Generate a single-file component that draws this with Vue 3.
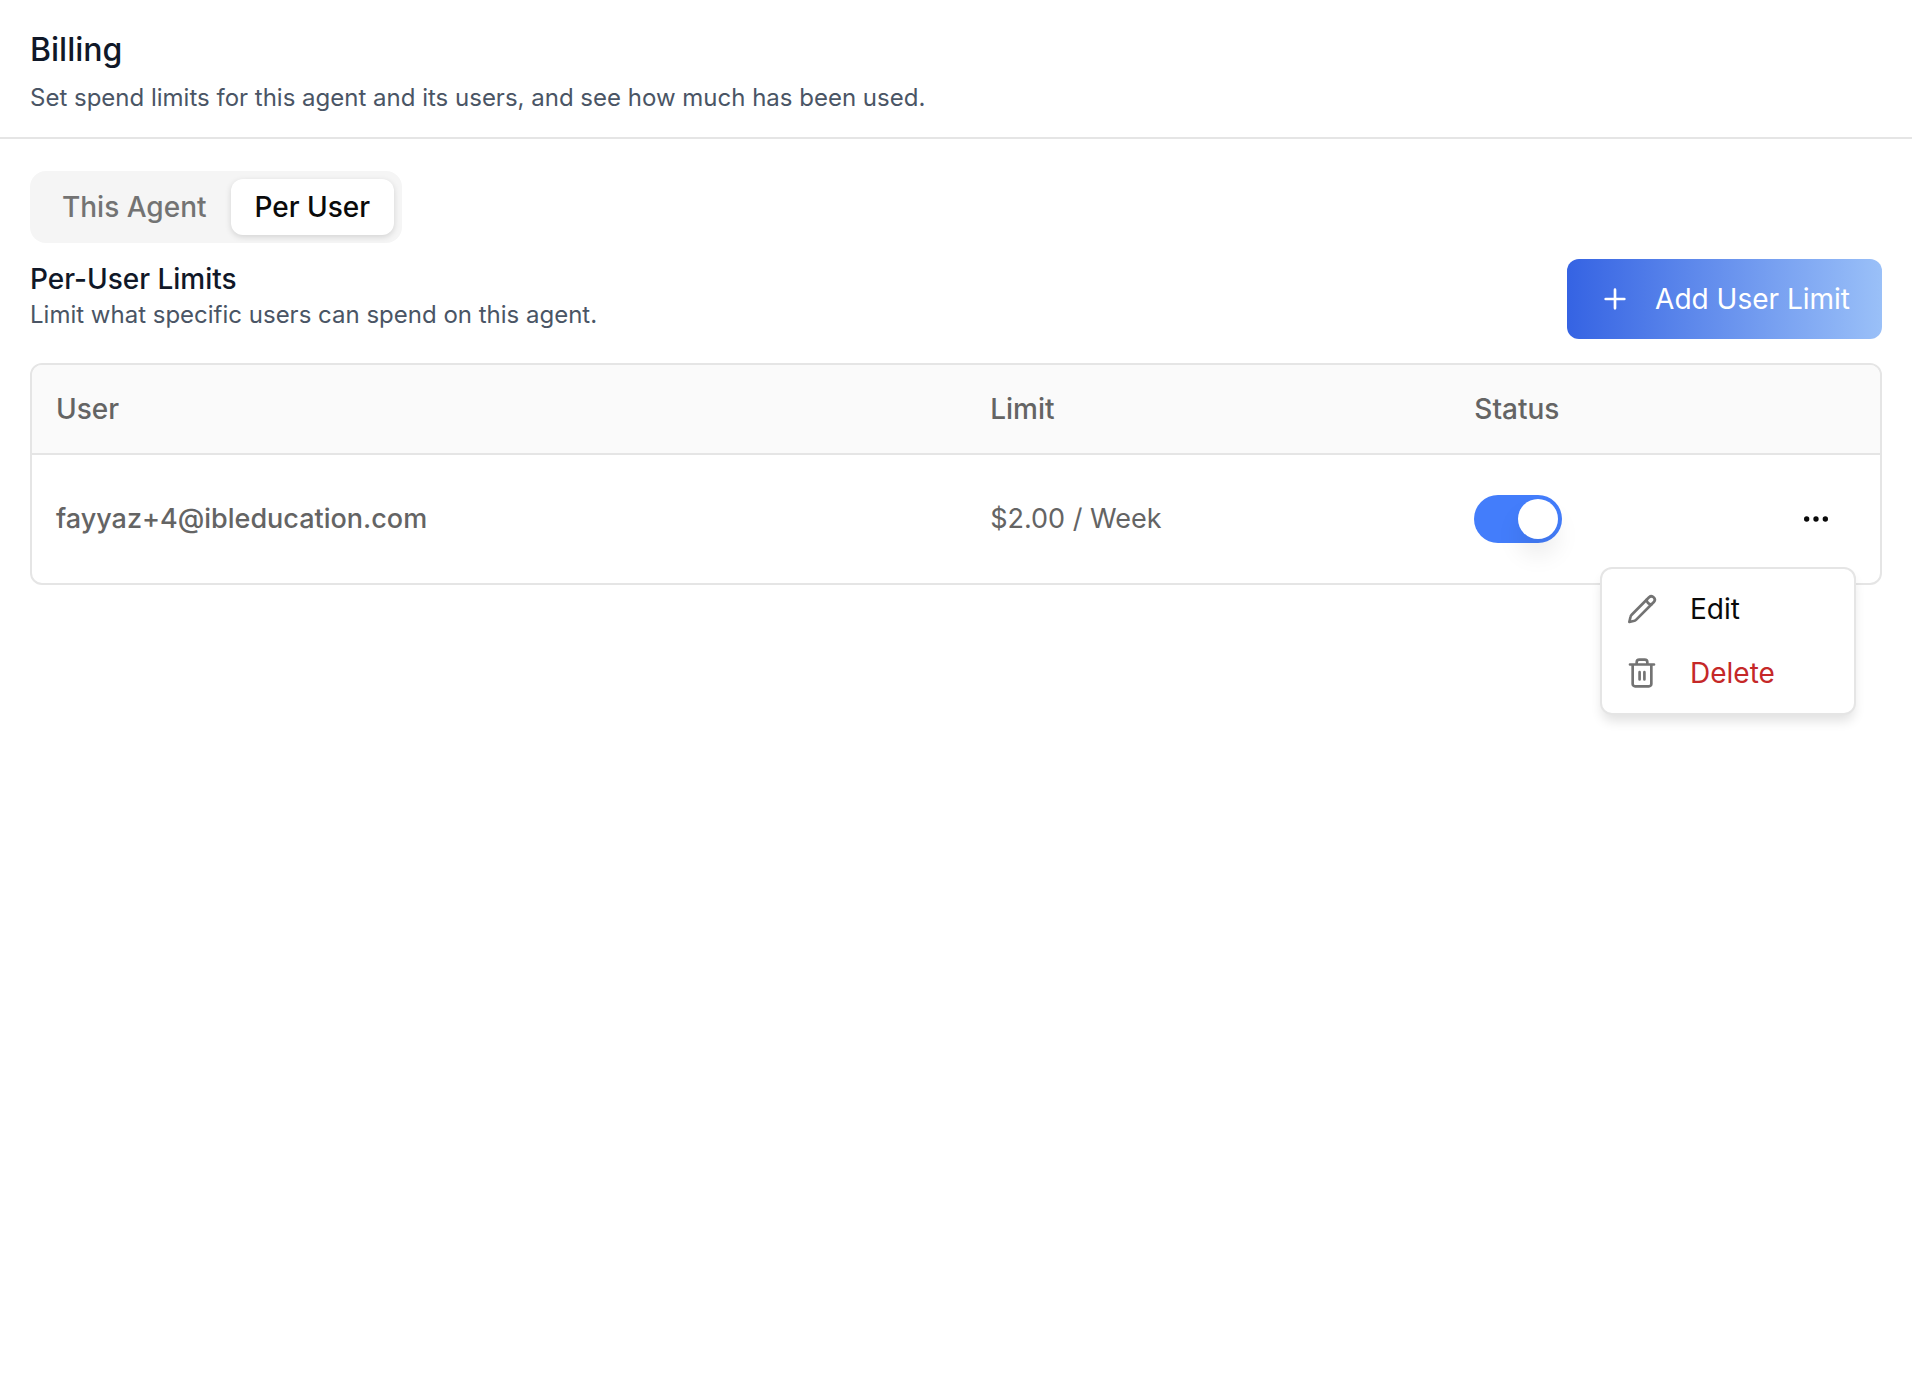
<script setup>
import { ref } from 'vue'

const tabs = ['This Agent', 'Per User']
const activeTab = ref('Per User')
const limits = ref([
  { id: 1, user: 'fayyaz+4@ibleducation.com', limit: '$2.00 / Week', enabled: true },
])
const openMenu = ref(1)

function toggleMenu(id) {
  openMenu.value = openMenu.value === id ? null : id
}
</script>

<template>
  <div class="page">
    <header class="page-header">
      <h1>Billing</h1>
      <p class="subtitle">Set spend limits for this agent and its users, and see how much has been used.</p>
    </header>

    <main class="content">
      <div class="tabs" role="tablist" aria-label="Limit scope">
        <button
          v-for="tab in tabs"
          :key="tab"
          type="button"
          role="tab"
          class="tab"
          :class="{ active: tab === activeTab }"
          :aria-selected="tab === activeTab"
          @click="activeTab = tab"
        >{{ tab }}</button>
      </div>

      <section class="limits">
        <div class="section-head">
          <div>
            <h2>Per-User Limits</h2>
            <p class="section-text">Limit what specific users can spend on this agent.</p>
          </div>
          <button type="button" class="add-button">
            <svg viewBox="0 0 24 24" aria-hidden="true"><path d="M5 12h14M12 5v14" /></svg>
            <span>Add User Limit</span>
          </button>
        </div>

        <table class="limits-table">
          <colgroup>
            <col class="col-user" />
            <col class="col-limit" />
            <col class="col-status" />
            <col />
          </colgroup>
          <thead>
            <tr>
              <th scope="col">User</th>
              <th scope="col">Limit</th>
              <th scope="col">Status</th>
              <th scope="col" aria-label="Actions"></th>
            </tr>
          </thead>
          <tbody>
            <tr v-for="row in limits" :key="row.id">
              <td class="user">{{ row.user }}</td>
              <td>{{ row.limit }}</td>
              <td>
                <input
                  v-model="row.enabled"
                  type="checkbox"
                  role="switch"
                  class="switch"
                  :aria-label="`Limit enabled for ${row.user}`"
                />
              </td>
              <td>
                <div class="actions">
                  <button
                    type="button"
                    class="more"
                    aria-label="Row actions"
                    aria-haspopup="menu"
                    :aria-expanded="openMenu === row.id"
                    @click="toggleMenu(row.id)"
                  >
                    <svg viewBox="0 0 24 24" aria-hidden="true">
                      <circle cx="5" cy="12" r="1" />
                      <circle cx="12" cy="12" r="1" />
                      <circle cx="19" cy="12" r="1" />
                    </svg>
                  </button>
                  <div v-if="openMenu === row.id" class="menu" role="menu">
                    <button type="button" role="menuitem" class="menu-item">
                      <svg viewBox="0 0 24 24" aria-hidden="true">
                        <path d="M17.3 3.2a2.55 2.55 0 0 1 3.6 3.6L7.7 20c-.4.4-.8.6-1.3.8l-3.9.9.9-3.9c.1-.5.4-.9.7-1.3z" />
                        <path d="M15.4 5.1c.3 1.9 1.7 3.3 3.6 3.6" />
                      </svg>
                      <span>Edit</span>
                    </button>
                    <button type="button" role="menuitem" class="menu-item danger">
                      <svg viewBox="0 0 24 24" aria-hidden="true">
                        <path d="M3 5.6h18M19 5.6v14.6a1.8 1.8 0 0 1-1.8 1.8H6.8A1.8 1.8 0 0 1 5 20.2V5.6M8 5.6V4a2 2 0 0 1 2-2h4a2 2 0 0 1 2 2v1.6M10.2 11.4v5.4M13.8 11.4v5.4" />
                      </svg>
                      <span>Delete</span>
                    </button>
                  </div>
                </div>
              </td>
            </tr>
          </tbody>
        </table>
      </section>
    </main>
  </div>
</template>

<style>
body {
  margin: 0;
  background: #fff;
}
</style>

<style scoped>
.page {
  min-height: 100vh;
  box-sizing: border-box;
  font-family: Inter, "Liberation Sans", sans-serif;
  font-size: 28px;
  line-height: 40px;
  color: #0a0a0a;
}

h1,
h2,
p {
  margin: 0;
}

button {
  font: inherit;
  color: inherit;
  border: 0;
  padding: 0;
  background: none;
  cursor: pointer;
}

svg {
  width: 32px;
  height: 32px;
  flex: none;
  fill: none;
  stroke: currentColor;
  stroke-width: 2;
  stroke-linecap: round;
  stroke-linejoin: round;
}

.page-header {
  padding: 30px 30px 22px;
  border-bottom: 2px solid #e5e5e5;
}

h1 {
  font-size: 32px;
  line-height: 40px;
  font-weight: 500;
  color: #101828;
}

.subtitle {
  margin-top: 11px;
  font-size: 24px;
  line-height: 34px;
  color: #4a5565;
}

.content {
  padding: 32px 30px;
}

.tabs {
  display: flex;
  width: fit-content;
  padding: 8px;
  border-radius: 16px;
  background: #f5f5f5;
}

.tab {
  padding: 8px 24px;
  border-radius: 12px;
  font-weight: 500;
  color: #737373;
}

.tab.active {
  background: #fff;
  color: #0a0a0a;
  box-shadow: 0 2px 6px rgba(0, 0, 0, 0.14);
}

.section-head {
  display: flex;
  align-items: flex-start;
  justify-content: space-between;
  margin-top: 16px;
  margin-bottom: 24px;
}

h2 {
  font-size: 28px;
  line-height: 40px;
  font-weight: 500;
  color: #101828;
}

.section-text {
  font-size: 24px;
  line-height: 32px;
  color: #4a5565;
}

.add-button {
  display: flex;
  align-items: center;
  gap: 24px;
  height: 80px;
  padding: 0 32px;
  border-radius: 12px;
  background: linear-gradient(to right, #3563e3, #9ac0f8);
  color: #fff;
}

.limits-table {
  width: 100%;
  table-layout: fixed;
  border: 2px solid #e5e5e5;
  border-radius: 12px;
  border-collapse: separate;
  border-spacing: 0;
  color: #646464;
}

.col-user {
  width: 50.55%;
}

.col-limit {
  width: 26.2%;
}

.col-status {
  width: 12%;
}

th {
  padding: 24px;
  border-bottom: 2px solid #e5e5e5;
  background: #fafafa;
  font-weight: 500;
  text-align: left;
}

th:first-child {
  border-top-left-radius: 10px;
}

th:last-child {
  border-top-right-radius: 10px;
}

td {
  padding: 24px;
  font-size: 27px;
  vertical-align: middle;
}

.user {
  font-weight: 500;
}

.switch {
  appearance: none;
  display: block;
  width: 88px;
  height: 48px;
  margin: 0;
  padding: 4px;
  box-sizing: border-box;
  border-radius: 24px;
  background: #d4d4d4;
  cursor: pointer;
}

.switch::before {
  content: "";
  display: block;
  width: 40px;
  height: 40px;
  border-radius: 50%;
  background: #fff;
  box-shadow: 0 16px 24px rgba(0, 0, 0, 0.08);
}

.switch:checked {
  background: #437dfb;
}

.switch:checked::before {
  margin-left: auto;
}

.actions {
  position: relative;
  display: flex;
  justify-content: flex-end;
  font-size: 28px;
}

.more {
  display: flex;
  align-items: center;
  justify-content: center;
  width: 80px;
  height: 80px;
  color: #0a0a0a;
}

.more svg {
  fill: currentColor;
}

.menu {
  position: absolute;
  top: calc(100% + 8px);
  right: 0;
  z-index: 1;
  width: 256px;
  box-sizing: border-box;
  padding: 8px;
  border: 2px solid #e5e5e5;
  border-radius: 12px;
  background: #fff;
  box-shadow: 0 8px 12px -2px rgba(0, 0, 0, 0.12);
}

.menu-item {
  display: flex;
  align-items: center;
  gap: 32px;
  width: 100%;
  padding: 12px 16px;
  color: #0a0a0a;
}

.menu-item svg {
  color: #737373;
}

.menu-item.danger {
  color: #c52828;
}
</style>
